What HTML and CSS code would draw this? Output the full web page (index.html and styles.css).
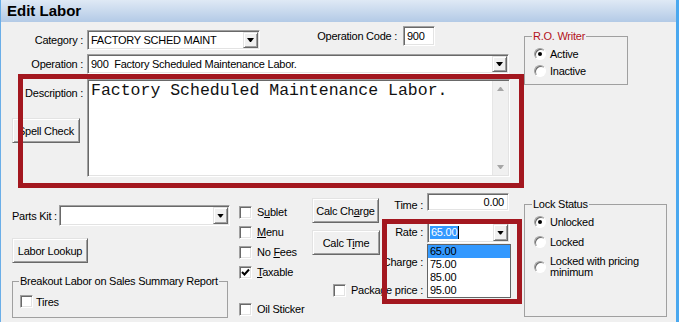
FILE: index.html
```html
<!DOCTYPE html>
<html>
<head>
<meta charset="utf-8">
<title>Edit Labor</title>
<link rel="stylesheet" href="styles.css">
</head>
<body>
<div class="window">
  <div class="titlebar">Edit Labor</div>
  <div class="client">
    <div class="top">
      <div class="top-main">
        <div class="row row-cat">
          <div class="lbl lbl-cat">Category :</div>
          <div class="combo combo-cat"><span class="combo-text">FACTORY SCHED MAINT</span><span class="drop-btn"></span></div>
          <div class="lbl lbl-opcode">Operation Code :</div>
          <div class="field field-opcode">900</div>
        </div>
        <div class="row row-op">
          <div class="lbl lbl-op">Operation :</div>
          <div class="combo combo-op"><span class="combo-text">900&nbsp; Factory Scheduled Maintenance Labor.</span><span class="drop-btn"></span></div>
        </div>
        <div class="row row-desc">
          <div class="desc-side">
            <div class="lbl lbl-desc">Description :</div>
            <div class="btn btn-spell"><span>Spell Check</span></div>
          </div>
          <div class="memo">
            <div class="memo-text">Factory Scheduled Maintenance Labor.</div>
            <div class="vscroll"><span class="arr arr-up"></span><span class="arr arr-down"></span></div>
          </div>
        </div>
      </div>
      <fieldset class="group group-ro">
        <legend>R.O. Writer</legend>
        <div class="radio-row first"><span class="radio checked"></span><span>Active</span></div>
        <div class="radio-row"><span class="radio"></span><span>Inactive</span></div>
      </fieldset>
    </div>

    <div class="bottom">
      <div class="col-a">
        <div class="parts-row">
          <span class="lbl lbl-parts">Parts Kit :</span>
          <div class="combo combo-parts"><span class="combo-text"></span><span class="drop-btn"></span></div>
        </div>
        <div class="btn btn-lookup"><span>Labor Lookup</span></div>
        <fieldset class="group group-breakout">
          <legend>Breakout Labor on Sales Summary Report</legend>
          <div class="check-row tires"><span class="check"></span><span>Tires</span></div>
        </fieldset>
      </div>

      <div class="col-b">
        <div class="check-row first"><span class="check"></span><span>S<u>u</u>blet</span></div>
        <div class="check-row"><span class="check"></span><span><u>M</u>enu</span></div>
        <div class="check-row"><span class="check"></span><span>No <u>F</u>ees</span></div>
        <div class="check-row"><span class="check checked"><svg width="9" height="9" viewBox="0 0 9 9"><path d="M1 4 L3.5 6.5 L8 1.5" fill="none" stroke="#000" stroke-width="2"/></svg></span><span><u>T</u>axable</span></div>
        <div class="check-row oil"><span class="check"></span><span>Oil Sticker</span></div>
      </div>

      <div class="col-calc">
        <div class="btn btn-calc-charge"><span>Calc Ch<u>a</u>rge</span></div>
        <div class="lbl calc-lbl lbl-time">Time :</div>
        <div class="field field-time">0.00</div>
        <div class="btn btn-calc-time"><span>Calc T<u>i</u>me</span></div>
        <div class="lbl calc-lbl lbl-rate">Rate :</div>
        <div class="combo combo-rate"><span class="combo-text"><span class="sel">65.00</span><span class="caret"></span></span><span class="drop-btn"></span></div>
        <div class="lbl calc-lbl lbl-charge">Charge :</div>
        <div class="field field-charge"></div>
        <div class="pkg"><span class="check"></span><span>Package price :</span></div>
        <div class="field field-pkg"></div>
      </div>

      <fieldset class="group group-lock">
        <legend>Lock Status</legend>
        <div class="radio-row first"><span class="radio checked"></span><span>Unlocked</span></div>
        <div class="radio-row"><span class="radio"></span><span>Locked</span></div>
        <div class="radio-row multi"><span class="radio"></span><span class="multi-text">Locked with pricing<br>minimum</span></div>
      </fieldset>
    </div>

    <div class="highlight hl-desc"></div>
    <div class="highlight hl-rate"></div>
    <div class="droplist">
      <div class="item active">65.00</div>
      <div class="item">75.00</div>
      <div class="item">85.00</div>
      <div class="item">95.00</div>
    </div>
  </div>
</div>
</body>
</html>
```

FILE: styles.css
```css
* { box-sizing: border-box; }
html, body { margin: 0; padding: 0; }
body {
  background: #f0f0f0;
  font-family: "Liberation Sans", Arial, sans-serif;
  font-size: 11px;
  letter-spacing: -0.25px;
  color: #000;
}
.window {
  width: 679px;
  height: 322px;
  display: flex;
  flex-direction: column;
  border-left: 1px solid #6aaee8;
  border-right: 3px solid #4aa8ef;
  overflow: hidden;
  background: #f0f0f0;
}
.titlebar {
  flex: none;
  height: 22px;
  background: linear-gradient(#dfe9f5, #b3cae6);
  font-weight: bold;
  font-size: 15px;
  letter-spacing: 0;
  line-height: 22px;
  padding-left: 6px;
}
.client { position: relative; flex: 1; }

/* shared control styles */
.lbl { white-space: nowrap; }
.combo, .field, .memo, .check {
  background: #fff;
  border: 1px solid;
  border-color: #a0a0a0 #fff #fff #a0a0a0;
  box-shadow: inset 1px 1px 0 #696969, inset -1px -1px 0 #e3e3e3;
}
.combo { display: flex; align-items: stretch; flex: none; }
.combo-text {
  flex: 1;
  display: flex;
  align-items: center;
  padding-left: 3px;
  white-space: nowrap;
  overflow: hidden;
}
.drop-btn {
  flex: none;
  width: 15px;
  margin: 1px;
  background: #f0f0f0;
  border: 1px solid;
  border-color: #e3e3e3 #696969 #696969 #e3e3e3;
  box-shadow: inset 1px 1px 0 #fff, inset -1px -1px 0 #a0a0a0;
  display: flex;
  align-items: center;
  justify-content: center;
}
.drop-btn::after {
  content: "";
  width: 7px;
  height: 4px;
  background: #000;
  clip-path: polygon(0 0, 7px 0, 4px 4px, 3px 4px);
}
.field { flex: none; white-space: nowrap; padding: 0 3px; }
.btn {
  display: flex;
  align-items: center;
  justify-content: center;
  background: #f0f0f0;
  border: 1px solid;
  border-color: #e3e3e3 #696969 #696969 #e3e3e3;
  box-shadow: inset 1px 1px 0 #fff, inset -1px -1px 0 #a0a0a0;
  white-space: nowrap;
}
.check {
  flex: none;
  width: 13px;
  height: 13px;
  margin-right: 5px;
  display: flex;
  align-items: center;
  justify-content: center;
}
.check-row {
  display: flex;
  align-items: center;
  height: 20px;
  white-space: nowrap;
}
.group {
  margin: 0;
  padding: 0;
  min-width: 0;
  border: 1px solid #a0a0a0;
  flex: none;
}
.group legend {
  padding: 0 1px;
  margin-left: 7px;
  line-height: 13px;
  white-space: nowrap;
}
.radio-row {
  display: flex;
  align-items: center;
  padding-left: 8px;
  white-space: nowrap;
}
.radio {
  flex: none;
  width: 12px;
  height: 12px;
  border-radius: 50%;
  margin-right: 4px;
  background: #fff;
  border: 1px solid;
  border-color: #a0a0a0 #fff #fff #a0a0a0;
  box-shadow: inset 1px 1px 0 #696969;
  display: flex;
  align-items: center;
  justify-content: center;
}
.radio.checked::after {
  content: "";
  width: 4px;
  height: 4px;
  border-radius: 50%;
  background: #000;
}

/* top section */
.top { display: flex; height: 171px; }
.top-main { width: 522px; flex: none; }
.row { display: flex; align-items: flex-start; }
.row-cat { margin-top: 4px; height: 24px; }
.lbl-cat, .lbl-op {
  width: 86px;
  flex: none;
  text-align: right;
  padding-right: 4px;
  line-height: 20px;
}
.lbl-cat { margin-top: 4px; }
.combo-cat { width: 173px; height: 20px; margin-top: 4px; }
.lbl-opcode {
  width: 87px;
  flex: none;
  text-align: right;
  padding-right: 6px;
  line-height: 20px;
  margin-left: 56px;
}
.field-opcode { width: 32px; height: 20px; line-height: 18px; }
.row-op { margin-top: 4px; height: 20px; }
.combo-op { width: 422px; height: 20px; }
.row-desc { margin-top: 5px; }
.desc-side { width: 86px; flex: none; }
.lbl-desc {
  text-align: right;
  padding-right: 4px;
  line-height: 14px;
  margin-top: 7px;
}
.btn-spell { margin: 18px 0 0 11px; width: 68px; height: 25px; }
.memo { width: 423px; height: 98px; display: flex; flex: none; }
.memo-text {
  flex: 1;
  font-family: "Liberation Mono", "Courier New", monospace;
  font-size: 16.5px;
  letter-spacing: 0;
  line-height: 19px;
  padding: 1px 0 0 3px;
  white-space: nowrap;
  color: #111;
}
.vscroll {
  flex: none;
  width: 16px;
  margin: 1px 1px 1px 0;
  background: #f0f0f0;
  border-left: 1px solid #e6e6e6;
  display: flex;
  flex-direction: column;
  justify-content: space-between;
  align-items: center;
  padding: 6px 0;
}
.arr { width: 7px; height: 4px; background: #a6a6a6; }
.arr-up { clip-path: polygon(3px 0, 4px 0, 7px 4px, 0 4px); }
.arr-down { clip-path: polygon(0 0, 7px 0, 4px 4px, 3px 4px); }

.group-ro { margin-top: 8px; margin-left: 1px; width: 104px; height: 55px; }
.group-ro legend { color: #b3121b; }
.group-ro .radio-row { height: 17px; padding-left: 9px; }
.group-ro .radio-row.first { margin-top: 2px; }

/* bottom section */
.bottom { display: flex; align-items: flex-start; }
.col-a { margin-left: 11px; width: 218px; flex: none; }
.parts-row { display: flex; height: 21px; margin-top: 12px; }
.lbl-parts { width: 47px; flex: none; line-height: 21px; margin-top: 1px; }
.combo-parts { width: 171px; height: 21px; }
.btn-lookup { margin-top: 12px; width: 76px; height: 25px; }
.group-breakout { margin-top: 12px; width: 216px; height: 43px; }
.group-breakout legend { margin-left: 6px; }
.tires { height: 13px; margin-top: 7px; padding-left: 7px; }
.tires .check { margin-right: 3px; }

.col-b { margin-left: 9px; width: 73px; flex: none; }
.col-b .first { margin-top: 9px; }
.col-b .oil { margin-top: 17px; }

.col-calc {
  flex: none;
  display: grid;
  grid-template-columns: 68px 47px 83px;
  grid-template-rows: 29px 30px 28px 20px;
}
.btn-calc-charge {
  grid-column: 1;
  grid-row: 1 / 3;
  align-self: start;
  margin-top: 5px;
  width: 67px;
  height: 25px;
}
.btn-calc-time {
  grid-column: 1;
  grid-row: 2 / 4;
  align-self: start;
  margin-top: 8px;
  width: 68px;
  height: 25px;
}
.calc-lbl { grid-column: 2; justify-self: end; padding-right: 4px; align-self: start; }
.lbl-time { grid-row: 1; line-height: 18px; margin-top: 3px; }
.lbl-rate { grid-row: 2; line-height: 21px; }
.lbl-charge { grid-row: 3; line-height: 20px; }
.field-time {
  grid-column: 3;
  grid-row: 1;
  align-self: start;
  width: 82px;
  height: 18px;
  line-height: 16px;
  text-align: right;
  padding-right: 4px;
}
.combo-rate { grid-column: 3; grid-row: 2; align-self: start; width: 83px; height: 21px; }
.combo-rate .combo-text { padding-left: 2px; }
.sel { background: #3399ff; color: #fff; padding: 0 1px; line-height: 13px; }
.caret { width: 1px; height: 13px; background: #000; }
.field-charge { grid-column: 3; grid-row: 3; align-self: start; width: 82px; height: 20px; }
.field-pkg { grid-column: 3; grid-row: 4; align-self: start; width: 82px; height: 18px; }
.pkg {
  grid-column: 1 / 3;
  grid-row: 4;
  justify-self: end;
  display: flex;
  align-items: center;
  height: 20px;
  padding-right: 4px;
  white-space: nowrap;
}

.group-lock { margin-top: 5px; margin-left: 14px; width: 143px; height: 119px; }
.group-lock .radio-row { height: 20px; padding-left: 9px; }
.group-lock .radio-row.first { margin-top: 1px; }
.group-lock .radio-row.multi { height: auto; margin-top: 4px; }
.multi-text { line-height: 11px; }

/* overlays */
.highlight {
  position: absolute;
  border: 5px solid #a3171f;
  pointer-events: none;
}
.hl-desc { left: 17px; top: 52px; width: 506px; height: 114px; }
.hl-rate { left: 381px; top: 197px; width: 140px; height: 85px; }
.droplist {
  position: absolute;
  left: 426px;
  top: 222px;
  width: 84px;
  background: #fff;
  border: 1px solid #646464;
}
.droplist .item { height: 13px; line-height: 13px; padding-left: 2px; }
.droplist .item.active { background: #3399ff; }
```
